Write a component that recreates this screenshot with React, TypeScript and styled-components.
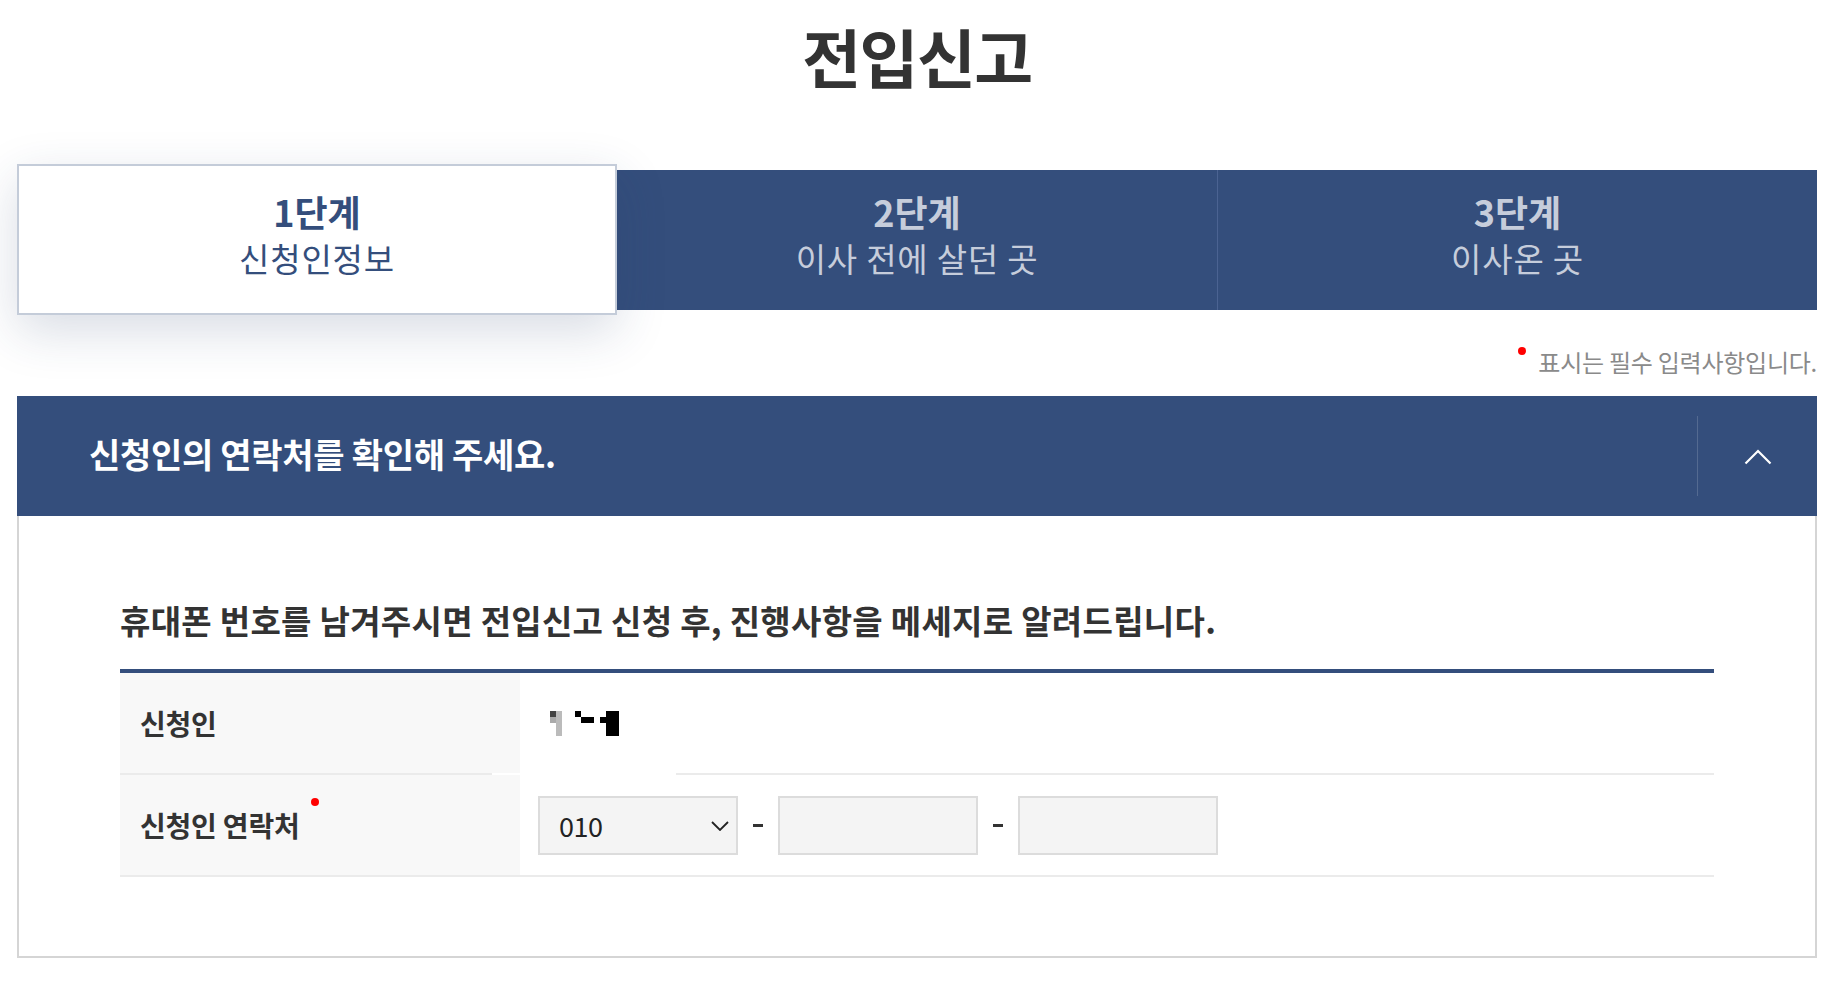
import React from 'react';
import styled, { createGlobalStyle } from 'styled-components';

const NAVY = '#344e7c';

const GlobalStyle = createGlobalStyle`
  body {
    margin: 0;
    background: #fff;
    font-family: "Noto Sans CJK KR", "Noto Sans", sans-serif;
    color: #333;
  }
`;

const Page = styled.div`
  width: 1800px;
  margin: 0 auto;
  padding-bottom: 39px;
`;

const Title = styled.h1`
  margin: 0;
  padding-top: 23px;
  text-align: center;
  font-size: 64px;
  line-height: 1;
  font-weight: 700;
  letter-spacing: -1.5px;
  color: #333;
`;

const StepList = styled.ol`
  list-style: none;
  margin: 77px 0 0;
  padding: 0;
  display: grid;
  grid-template-columns: repeat(3, 1fr);
  align-items: center;
  height: 151px;
`;

const StepItem = styled.li<{ $active?: boolean; $divider?: boolean }>`
  box-sizing: border-box;
  display: flex;
  flex-direction: column;
  align-items: center;
  justify-content: center;
  padding-bottom: 10px;
  height: ${(p) => (p.$active ? '151px' : '140px')};
  background: ${(p) => (p.$active ? '#fff' : NAVY)};
  color: ${(p) => (p.$active ? NAVY : '#c6cddb')};
  border: ${(p) => (p.$active ? '2px solid #c4ccd9' : 'none')};
  border-left: ${(p) => (p.$divider ? '1px solid #4b6392' : undefined)};
  box-shadow: ${(p) => (p.$active ? '0 16px 50px rgba(40, 62, 105, 0.18)' : 'none')};
  position: relative;
  z-index: ${(p) => (p.$active ? 1 : 0)};
`;

const StepNo = styled.strong`
  font-size: 36px;
  line-height: 1.2;
  font-weight: 700;
  letter-spacing: 0;
`;

const StepName = styled.span`
  margin-top: 6px;
  font-size: 33px;
  line-height: 1.2;
  font-weight: 400;
  letter-spacing: 0.8px;
`;

const Notice = styled.p`
  margin: 35px 0 0;
  display: flex;
  justify-content: flex-end;
  align-items: flex-start;
  font-size: 24px;
  line-height: 1;
  letter-spacing: -0.25px;
  color: #8a8a8a;
`;

const Dot = styled.span<{ $gap: number; $lift: number }>`
  display: inline-block;
  flex: none;
  width: 8px;
  height: 8px;
  border-radius: 50%;
  background: #f00;
  margin-top: ${(p) => -p.$lift}px;
  margin-right: ${(p) => (p.$gap > 0 ? p.$gap : 0)}px;
  margin-left: ${(p) => (p.$gap < 0 ? -p.$gap : 0)}px;
`;

const Section = styled.section`
  margin-top: 22px;
`;

const SectionHead = styled.div`
  display: flex;
  align-items: center;
  height: 120px;
  background: ${NAVY};
`;

const SectionTitle = styled.h3`
  flex: 1;
  margin: 0 0 4px;
  padding-left: 72px;
  font-size: 34px;
  line-height: 1;
  font-weight: 700;
  letter-spacing: -0.3px;
  color: #fff;
`;

const ToggleButton = styled.button`
  display: flex;
  align-items: center;
  justify-content: center;
  width: 120px;
  height: 80px;
  padding: 0;
  border: none;
  border-left: 1px solid rgba(255, 255, 255, 0.16);
  background: transparent;
  cursor: pointer;
`;

const SectionBody = styled.div`
  border: 2px solid #d5d5d5;
  border-top: none;
  padding: 88px 101px 79px;
`;

const Lead = styled.p`
  margin: 0 0 32px;
  font-size: 33px;
  line-height: 1;
  font-weight: 700;
  letter-spacing: 0.3px;
  color: #333;
`;

const Table = styled.div`
  border-top: 4px solid ${NAVY};
`;

const Row = styled.div`
  position: relative;
  display: flex;
  height: 100px;
  border-bottom: 2px solid #ebebeb;
`;

const LabelCell = styled.div`
  display: flex;
  align-items: center;
  width: 400px;
  padding-left: 20px;
  box-sizing: border-box;
  background: #f8f8f8;
`;

const LabelText = styled.span`
  display: inline-flex;
  align-items: flex-start;
  font-size: 28px;
  line-height: 1;
  font-weight: 700;
  letter-spacing: -0.2px;
  color: #333;
`;

const ValueCell = styled.div`
  flex: 1;
  display: flex;
  align-items: center;
  padding-left: 18px;
`;

const MosaicWrap = styled.span`
  display: inline-flex;
  margin-left: 12px;
`;

const DividerMask = styled.span`
  position: absolute;
  left: 372px;
  bottom: -2px;
  width: 184px;
  height: 2px;
  background: #fff;
`;

const SelectWrap = styled.div`
  position: relative;
  width: 200px;
  height: 59px;
`;

const Select = styled.select`
  appearance: none;
  width: 100%;
  height: 100%;
  box-sizing: border-box;
  padding: 0 0 0 19px;
  border: 2px solid #dcdcdc;
  border-radius: 0;
  background: #f4f4f4;
  font-family: inherit;
  font-size: 27px;
  letter-spacing: -0.5px;
  color: #222;
`;

const SelectArrow = styled.svg`
  position: absolute;
  right: 9px;
  top: 25px;
  pointer-events: none;
`;

const Separator = styled.span`
  display: flex;
  align-items: center;
  justify-content: center;
  width: 40px;
  &::before {
    content: '';
    width: 10px;
    height: 3px;
    background: #333;
  }
`;

const TextInput = styled.input`
  width: 200px;
  height: 59px;
  box-sizing: border-box;
  border: 2px solid #dcdcdc;
  border-radius: 0;
  background: #f4f4f4;
  font-family: inherit;
  font-size: 27px;
  padding: 0 16px;
`;

const steps = [
  { no: '1단계', name: '신청인정보' },
  { no: '2단계', name: '이사 전에 살던 곳' },
  { no: '3단계', name: '이사온 곳' },
];

const Mosaic = () => (
  <svg width="69" height="25" viewBox="0 0 69 25" shapeRendering="crispEdges">
    <rect x="0" y="0" width="6" height="6" fill="#444" />
    <rect x="0" y="6" width="6" height="6" fill="#aaa" />
    <rect x="6" y="0" width="6" height="25" fill="#bbb" />
    <rect x="25" y="0" width="6" height="6" fill="#000" />
    <rect x="31" y="6" width="13" height="6" fill="#000" />
    <rect x="50" y="6" width="6" height="6" fill="#000" />
    <rect x="56" y="0" width="13" height="25" fill="#000" />
  </svg>
);

const App: React.FC = () => {
  return (
    <Page>
      <GlobalStyle />
      <Title>전입신고</Title>

      <StepList>
        {steps.map((s, i) => (
          <StepItem key={s.no} $active={i === 0} $divider={i === 2}>
            <StepNo>{s.no}</StepNo>
            <StepName>{s.name}</StepName>
          </StepItem>
        ))}
      </StepList>

      <Notice>
        <Dot $gap={12} $lift={3} />
        표시는 필수 입력사항입니다.
      </Notice>

      <Section>
        <SectionHead>
          <SectionTitle>신청인의 연락처를 확인해 주세요.</SectionTitle>
          <ToggleButton aria-label="접기">
            <svg width="28" height="17" viewBox="0 0 28 17" fill="none">
              <polyline points="1.5,15.5 14,3 26.5,15.5" stroke="#fff" strokeWidth="2.2" />
            </svg>
          </ToggleButton>
        </SectionHead>

        <SectionBody>
          <Lead>휴대폰 번호를 남겨주시면 전입신고 신청 후, 진행사항을 메세지로 알려드립니다.</Lead>
          <Table>
            <Row>
              <LabelCell>
                <LabelText>신청인</LabelText>
              </LabelCell>
              <ValueCell>
                <MosaicWrap>
                  <Mosaic />
                </MosaicWrap>
              </ValueCell>
              <DividerMask />
            </Row>
            <Row>
              <LabelCell>
                <LabelText>
                  신청인 연락처
                  <Dot $gap={-11} $lift={13} />
                </LabelText>
              </LabelCell>
              <ValueCell>
                <SelectWrap>
                  <Select defaultValue="010">
                    <option value="010">010</option>
                    <option value="011">011</option>
                    <option value="016">016</option>
                  </Select>
                  <SelectArrow width="18" height="10" viewBox="0 0 18 10" fill="none">
                    <polyline points="1,1 9,9 17,1" stroke="#222" strokeWidth="1.8" />
                  </SelectArrow>
                </SelectWrap>
                <Separator />
                <TextInput type="text" />
                <Separator />
                <TextInput type="text" />
              </ValueCell>
            </Row>
          </Table>
        </SectionBody>
      </Section>
    </Page>
  );
};

export default App;
